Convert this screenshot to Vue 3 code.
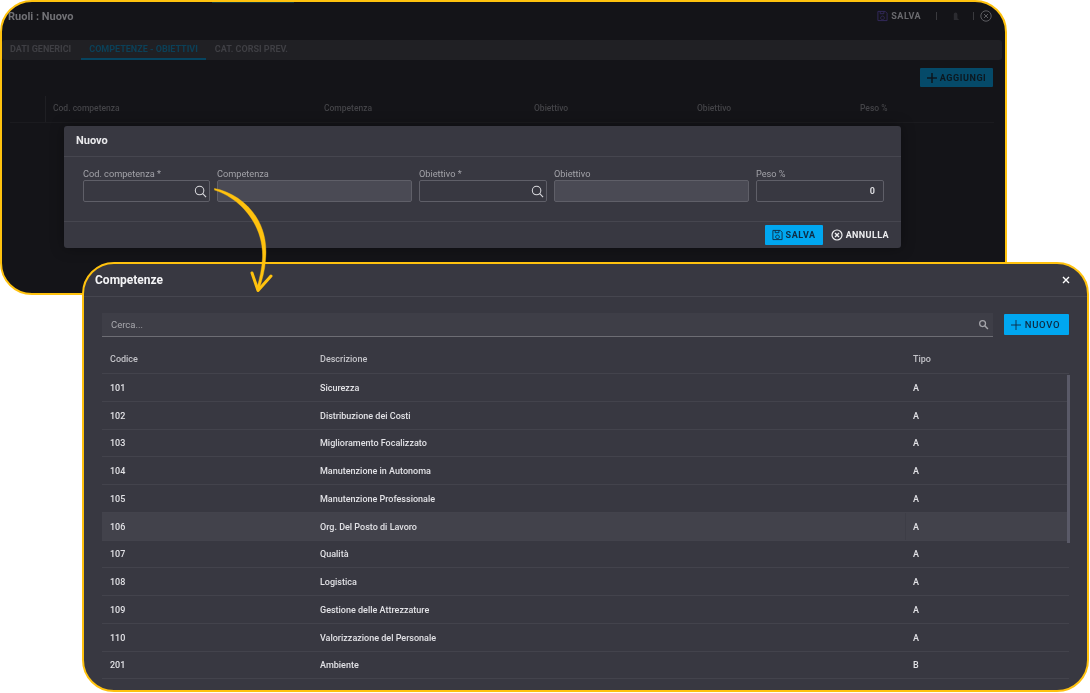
<template>
  <div class="stage">
    <!-- finestra dietro, oscurata dal dialog -->
    <section class="win back">
      <i class="top-glow"></i>
      <header class="back-head">
        <h1>Ruoli : Nuovo</h1>
        <div class="back-actions">
          <svg class="ic-save-top" viewBox="0 0 12 12"><path d="M1 1h8l2 2v8H1z M3.500 1v2.500h4V1 M6 6a2 2 0 1 0 .01 0" fill="none" stroke="currentColor" stroke-width="1"/></svg>
          <span class="salva-top">SALVA</span>
          <i class="sep sep-a"></i>
          <svg class="ic-bell" viewBox="0 0 10 12"><path d="M2 10V3.500a2 2 0 0 1 4 0V8l2 2z" fill="currentColor"/></svg>
          <i class="sep sep-b"></i>
          <svg class="ic-close-top" viewBox="0 0 12 12"><circle cx="6" cy="6" r="5.200" fill="none" stroke="currentColor"/><path d="M4 4l4 4M8 4l-4 4" stroke="currentColor"/></svg>
        </div>
      </header>
      <nav class="tabs">
        <a v-for="t in tabs" :key="t" :class="{ on: t === activeTab }">{{ t }}</a>
      </nav>
      <div class="toolbar">
        <button class="add-btn">
          <svg viewBox="0 0 10 10"><path d="M5 0v10M0 5h10" stroke="currentColor" stroke-width="1.600"/></svg>
          AGGIUNGI
        </button>
      </div>
      <div class="back-table">
        <span></span>
        <span v-for="(c, i) in backCols" :key="i">{{ c }}</span>
      </div>

      <div class="dialog">
        <div class="dialog-head">Nuovo</div>
        <div class="dialog-body">
          <div v-for="f in fields" :key="f.label" class="field">
            <label>{{ f.label }}</label>
            <div class="input" :class="{ off: f.off }">
              <svg v-if="f.search" viewBox="0 0 14 14"><circle cx="6" cy="6" r="4.600" fill="none" stroke="currentColor" stroke-width="1.100"/><path d="M9.400 9.400l3.600 3.600" stroke="currentColor" stroke-width="1.200"/></svg>
              <b v-if="f.value">{{ f.value }}</b>
            </div>
          </div>
        </div>
        <div class="dialog-foot">
          <button class="save-btn">
            <svg viewBox="0 0 12 12"><path d="M1 1h8l2 2v8H1z M3.500 1v2.500h4V1 M6 6a2 2 0 1 0 .01 0" fill="none" stroke="currentColor" stroke-width="1"/></svg>
            SALVA
          </button>
          <button class="cancel-btn">
            <svg viewBox="0 0 12 12"><circle cx="6" cy="6" r="5" fill="none" stroke="currentColor" stroke-width="1.200"/><path d="M4 4l4 4M8 4l-4 4" stroke="currentColor" stroke-width="1.400"/></svg>
            ANNULLA
          </button>
        </div>
      </div>
    </section>

    <!-- finestra davanti: lookup competenze -->
    <section class="win front">
      <header class="front-head">
        <h2>Competenze</h2>
        <svg viewBox="0 0 8 8"><path d="M1 1l6 6M7 1l-6 6" stroke="currentColor" stroke-width="1.400"/></svg>
      </header>
      <div class="search-row">
        <div class="search">
          <span>Cerca...</span>
          <svg viewBox="0 0 12 12"><circle cx="5" cy="5" r="3.200" fill="none" stroke="currentColor" stroke-width="1.400"/><path d="M7.400 7.400l3.400 3.400" stroke="currentColor" stroke-width="1.600"/></svg>
        </div>
        <button class="new-btn">
          <svg viewBox="0 0 11 11"><path d="M5.500 0v11M0 5.500h11" stroke="currentColor" stroke-width="1"/></svg>
          NUOVO
        </button>
      </div>
      <div class="table">
        <div class="row head">
          <span>Codice</span><span>Descrizione</span><span>Tipo</span>
        </div>
        <div v-for="r in rows" :key="r.code" class="row" :class="{ hover: r.code === hovered }">
          <span>{{ r.code }}</span><span>{{ r.desc }}</span><span>{{ r.type }}</span>
        </div>
        <i class="scrollbar"></i>
      </div>
    </section>

    <svg class="arrow" viewBox="0 0 70 110" fill="#ffc20e" stroke="#ffc20e" stroke-linecap="round" stroke-linejoin="round">
      <path d="M.5.500C26 5 56 30 51.500 72 51 82 48 92 45 102L42.500 101C46 90 48 80 48.500 70 50 35 24 9 .5 2Z" stroke-width=".4"/>
      <path d="M38 85 44 102.500 57 88" fill="none" stroke-width="3"/>
    </svg>
  </div>
</template>

<script setup>
const tabs = ['DATI GENERICI', 'COMPETENZE - OBIETTIVI', 'CAT. CORSI PREV.']
const activeTab = 'COMPETENZE - OBIETTIVI'
const backCols = ['Cod. competenza', 'Competenza', 'Obiettivo', 'Obiettivo', 'Peso %']
const hovered = '106'

const fields = [
  { label: 'Cod. competenza *', search: true },
  { label: 'Competenza', off: true },
  { label: 'Obiettivo *', search: true },
  { label: 'Obiettivo', off: true },
  { label: 'Peso %', value: '0' }
]

const rows = [
  { code: '101', desc: 'Sicurezza', type: 'A' },
  { code: '102', desc: 'Distribuzione dei Costi', type: 'A' },
  { code: '103', desc: 'Miglioramento Focalizzato', type: 'A' },
  { code: '104', desc: 'Manutenzione in Autonoma', type: 'A' },
  { code: '105', desc: 'Manutenzione Professionale', type: 'A' },
  { code: '106', desc: 'Org. Del Posto di Lavoro', type: 'A' },
  { code: '107', desc: 'Qualità', type: 'A' },
  { code: '108', desc: 'Logistica', type: 'A' },
  { code: '109', desc: 'Gestione delle Attrezzature', type: 'A' },
  { code: '110', desc: 'Valorizzazione del Personale', type: 'A' },
  { code: '201', desc: 'Ambiente', type: 'B' }
]
</script>

<style>
html, body { margin: 0; background: #fff; }
</style>

<style scoped>
.stage {
  position: relative;
  width: 1090px;
  height: 693px;
  overflow: hidden;
  background: #fff;
  font-family: Roboto, "Liberation Sans", sans-serif;
  filter: blur(.3px);
}
.win {
  position: absolute;
  box-sizing: border-box;
  border: 2px solid #ffc20e;
  border-radius: 32px;
  overflow: hidden;
  display: flex;
  flex-direction: column;
}
svg { display: block; flex: none; }
button { border: 0; padding: 0; font-family: inherit; }

/* finestra dietro */
.back { left: 0; top: 0; width: 1007px; height: 295px; background: #141418; }
.top-glow { position: absolute; left: 210px; top: 0; width: 82px; height: 1px; background: #123a3c; }
.back-head { height: 38px; flex: none; display: flex; align-items: center; justify-content: space-between; padding: 0 13px 10px 6px; box-sizing: border-box; }
.back-head h1 { margin: 0; font-size: 11px; font-weight: 700; color: #717175; }
.back-actions { display: flex; align-items: center; color: #68686c; }
.ic-save-top { width: 11px; height: 12px; color: #352b5e; margin-right: 3px; }
.salva-top { font-size: 9px; font-weight: 700; letter-spacing: .5px; color: #6a6a6e; }
.sep { width: 1px; height: 8px; background: #3a3a3e; }
.sep-a { margin: 0 15px; }
.ic-bell { width: 9px; height: 11px; color: #2b2b30; margin-right: 12px; }
.ic-close-top { width: 12px; height: 12px; margin-left: 6px; color: #5c5c60; }
.tabs { height: 20px; flex: none; margin-right: 3px; background: #202024; border-radius: 3px; display: flex; box-sizing: border-box; }
.tabs a { font-size: 9px; font-weight: 700; line-height: 19px; color: #3f3f44; padding: 0 8px; }
.tabs a.on { color: #0b4058; border-bottom: 2px solid #07445f; margin: 0 0 0 2px; height: 20px; box-sizing: border-box; }
.tabs a:last-child { margin-left: 1px; }
.toolbar { height: 36px; flex: none; display: flex; justify-content: flex-end; padding: 8px 12px 0 0; box-sizing: border-box; }
.add-btn { width: 73px; height: 19px; display: flex; align-items: center; justify-content: center; gap: 3px; background: #054a69; color: #0c1820; border-radius: 1px; font-size: 9px; font-weight: 700; letter-spacing: .6px; }
.add-btn svg { width: 10px; height: 10px; }
.back-table { height: 26px; flex: none; margin: 0 11px 0 8px; display: grid; grid-template-columns: 36px 271px 210px 163px 163px 1fr; align-items: center; font-size: 8.500px; line-height: 24px; font-weight: 500; color: #434347; border-bottom: 1px solid #1b1b1f; }
.back-table span { padding-left: 7px; padding-bottom: 2px; }
.back-table span:first-child { height: 26px; border-right: 1px solid #1f1f23; padding: 0; }

/* dialog nuovo */
.dialog { position: absolute; left: 62px; top: 124px; width: 837px; height: 122px; background: #383841; border-radius: 3px; display: flex; flex-direction: column; box-shadow: 0 0 14px rgba(0,0,0,.35); }
.dialog-head { height: 31px; flex: none; box-sizing: border-box; border-bottom: 1px solid #46464f; padding: 0 12px 1px; font-size: 11px; font-weight: 700; line-height: 29px; color: #e9e9ec; }
.dialog-body { height: 65px; flex: none; box-sizing: border-box; padding: 11px 0 0 19px; display: grid; grid-template-columns: 127px 195px 128px 195px 128px; gap: 7px; border-bottom: 1px solid #46464f; }
.field label { display: block; height: 12px; font-size: 9.200px; line-height: 12px; color: #a2a2a8; }
.input { position: relative; box-sizing: border-box; height: 22px; border: 1.500px solid #5f5f68; border-radius: 2px; display: flex; align-items: center; justify-content: flex-end; padding-right: 8px; color: #dadade; }
.input.off { background: #4a4a54; }
.input svg { width: 13px; height: 13px; margin-right: -6px; }
.input b { font-size: 9px; font-weight: 700; }
.dialog-foot { flex: 1; display: flex; align-items: center; justify-content: flex-end; padding-right: 12px; gap: 8px; }
.save-btn { width: 58px; height: 20px; background: #00a7f0; color: #0e2c44; border-radius: 1px; font-size: 9px; font-weight: 700; letter-spacing: .6px; display: flex; align-items: center; justify-content: center; gap: 3px; }
.save-btn svg { width: 11px; height: 12px; }
.cancel-btn { background: none; color: #eeeef0; font-size: 9px; font-weight: 700; letter-spacing: .4px; display: flex; align-items: center; gap: 3px; }
.cancel-btn svg { width: 12px; height: 12px; }

/* finestra davanti */
.front { left: 82px; top: 262px; width: 1007px; height: 430px; background: #383841; }
.front-head { height: 33px; flex: none; box-sizing: border-box; border-bottom: 1px solid #46464f; display: flex; align-items: center; justify-content: space-between; padding: 0 17px 0 11px; color: #fff; }
.front-head h2 { margin: 0; font-size: 12px; font-weight: 700; color: #f4f4f6; }
.front-head svg { width: 8px; height: 8px; }
.search-row { flex: none; margin-top: 16px; padding: 0 18px; display: flex; gap: 11px; align-items: flex-start; }
.search { flex: 1; height: 24px; box-sizing: border-box; background: #3e3e47; border-bottom: 1px solid #6d6d74; display: flex; align-items: center; justify-content: space-between; padding: 0 4px 0 9px; font-size: 9.500px; color: #a9a9ae; }
.search svg { width: 11px; height: 11px; color: #a5a5aa; }
.new-btn { width: 65px; height: 21px; margin-top: 1px; padding-right: 2px; background: #00a7f0; color: #0d2a42; border-radius: 1px; font-size: 9.500px; font-weight: 500; letter-spacing: .7px; display: flex; align-items: center; justify-content: center; gap: 4px; }
.new-btn svg { width: 10px; height: 10px; }
.table { position: relative; margin: 8px 18px 0; }
.row { display: grid; grid-template-columns: 210px 593px 1fr; height: 27.750px; box-sizing: border-box; align-items: center; border-bottom: 1px solid #43434c; font-size: 9px; font-weight: 500; color: #e2e2e6; }
.row span { padding-left: 8px; padding-top: 1px; }
.row.head { height: 29px; color: #c4c4c9; }
.row.head span { padding-top: 0; }
.row.hover { background: #42424b; }
.row.hover span:last-child { height: 100%; display: flex; align-items: center; box-sizing: border-box; border-left: 1px solid #3d3d46; padding-left: 7px; }
.scrollbar { position: absolute; right: -1px; top: 30px; width: 3px; height: 168px; background: #5a5a68; }

.arrow { position: absolute; left: 214px; top: 188px; width: 70px; height: 110px; }
</style>
